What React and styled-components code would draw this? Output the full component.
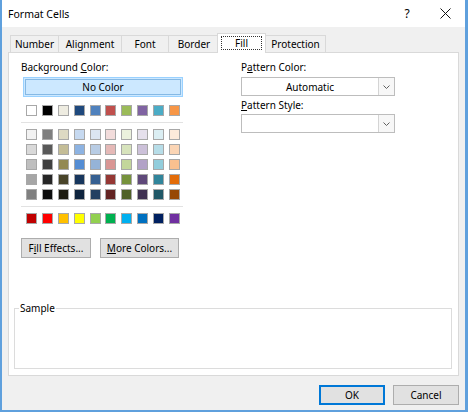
import React from 'react'
import styled, { createGlobalStyle, css } from 'styled-components'

const GlobalStyle = createGlobalStyle`
  html, body {
    margin: 0;
    padding: 0;
    background: #ffffff;
  }
  body {
    font-family: "Noto Sans", "Open Sans", sans-serif;
    font-size: 10px;
    color: #000000;
  }
`

const themeRow = ['#FFFFFF', '#000000', '#EEECE1', '#1F497D', '#4F81BD', '#C0504D', '#9BBB59', '#8064A2', '#4BACC6', '#F79646']

const tintRows = [
  ['#F2F2F2', '#7F7F7F', '#DDD9C3', '#C6D9F0', '#DBE5F1', '#F2DCDB', '#EBF1DD', '#E5E0EC', '#DBEEF3', '#FDEADA'],
  ['#D9D9D9', '#595959', '#C4BD97', '#8DB3E2', '#B8CCE4', '#E5B9B7', '#D7E3BC', '#CCC1D9', '#B7DDE8', '#FBD5B5'],
  ['#BFBFBF', '#404040', '#938953', '#548DD4', '#95B3D7', '#D99694', '#C3D69B', '#B2A2C7', '#92CDDC', '#FAC08F'],
  ['#A6A6A6', '#262626', '#494429', '#17365D', '#366092', '#953734', '#76923C', '#5F497A', '#31859B', '#E36C09'],
  ['#808080', '#0D0D0D', '#1D1B10', '#0F243E', '#244061', '#632423', '#4F6128', '#3F3151', '#205867', '#974806']
]

const standardRow = ['#C00000', '#FF0000', '#FFC000', '#FFFF00', '#92D050', '#00B050', '#00B0F0', '#0070C0', '#002060', '#7030A0']

const tabs = [
  { label: 'Number', width: 49 },
  { label: 'Alignment', width: 64 },
  { label: 'Font', width: 48 },
  { label: 'Border', width: 52 },
  { label: 'Fill', width: 49, active: true },
  { label: 'Protection', width: 61 }
]

export default function App () {
  return (
    <>
      <GlobalStyle />
      <Window>
        <TitleBar>
          <Title>Format Cells</Title>
          <HelpButton>?</HelpButton>
          <CloseButton>
            <svg width='11' height='11' viewBox='0 0 11 11'>
              <path d='M0.5 0.5 L10.5 10.5 M10.5 0.5 L0.5 10.5' stroke='#111' strokeWidth='1' fill='none' />
            </svg>
          </CloseButton>
        </TitleBar>

        <Body>
          <TabStrip>
            {tabs.map(t => (
              <Tab key={t.label} $width={t.width} $active={t.active}>
                {t.active ? <FocusRect>{t.label}</FocusRect> : t.label}
              </Tab>
            ))}
          </TabStrip>

          <Panel>
            <Columns>
              <LeftColumn>
                <Label>Background <u>C</u>olor:</Label>
                <NoColorButton>
                  <NoColorInner>No Color</NoColorInner>
                </NoColorButton>

                <SwatchGrid $top={8}>
                  {themeRow.map(c => <Swatch key={c} $color={c} />)}
                </SwatchGrid>
                <Separator />
                <SwatchGrid $top={6}>
                  {tintRows.flat().map((c, i) => <Swatch key={i} $color={c} />)}
                </SwatchGrid>
                <Separator />
                <SwatchGrid $top={6}>
                  {standardRow.map(c => <Swatch key={c} $color={c} />)}
                </SwatchGrid>

                <ButtonRow>
                  <Button $width={70}>F<u>i</u>ll Effects...</Button>
                  <Button $width={79}><u>M</u>ore Colors...</Button>
                </ButtonRow>
              </LeftColumn>

              <RightColumn>
                <Label>P<u>a</u>ttern Color:</Label>
                <Combo>
                  <ComboValue>Automatic</ComboValue>
                  <ComboArrow><Chevron /></ComboArrow>
                </Combo>
                <Label $top={2}><u>P</u>attern Style:</Label>
                <Combo $top={1}>
                  <ComboValue />
                  <ComboArrow><Chevron /></ComboArrow>
                </Combo>
              </RightColumn>
            </Columns>

            <SampleGroup>
              <legend>Sample</legend>
            </SampleGroup>
          </Panel>

          <Footer>
            <Button $width={66} $height={20} $default>OK</Button>
            <Button $width={66} $height={20}>Cancel</Button>
          </Footer>
        </Body>
      </Window>
    </>
  )
}

function Chevron () {
  return (
    <svg width='7' height='4' viewBox='0 0 7 4'>
      <path d='M0.5 0.5 L3.5 3.5 L6.5 0.5' stroke='#606060' strokeWidth='1' fill='none' />
    </svg>
  )
}

const Window = styled.div`
  width: 468px;
  height: 412px;
  box-sizing: border-box;
  border-left: 2px solid #5fa0dd;
  border-right: 3px solid #5fa0dd;
  border-bottom: 2px solid #5fa0dd;
  background: #f0f0f0;
  display: flex;
  flex-direction: column;
`

const TitleBar = styled.div`
  height: 27px;
  flex: none;
  background: #ffffff;
  display: flex;
  align-items: center;
  padding-left: 6px;
`

const Title = styled.div`
  font-size: 10.5px;
  flex: 1;
`

const controlBox = css`
  height: 27px;
  display: flex;
  align-items: center;
  justify-content: center;
`

const HelpButton = styled.div`
  ${controlBox}
  width: 36px;
  font-size: 12px;
`

const CloseButton = styled.div`
  ${controlBox}
  width: 40px;
`

const Body = styled.div`
  flex: 1;
  padding: 6px 6px 0 6px;
  display: flex;
  flex-direction: column;
`

const TabStrip = styled.div`
  height: 19px;
  display: flex;
  align-items: flex-end;
  padding-left: 2px;
`

const Tab = styled.div`
  box-sizing: border-box;
  width: ${p => p.$width}px;
  height: 17px;
  border: 1px solid #d9d9d9;
  border-bottom: none;
  margin-left: -1px;
  display: flex;
  align-items: center;
  justify-content: center;
  background: #f0f0f0;

  &:first-child {
    margin-left: 0;
  }

  ${p => p.$active && css`
    height: 20px;
    margin-left: -3px;
    margin-bottom: -1px;
    background: #ffffff;
    position: relative;
    z-index: 1;
    padding-bottom: 2px;
  `}
`

const FocusRect = styled.span`
  box-sizing: border-box;
  width: 41px;
  height: 14px;
  border: 1px dotted #333;
  display: flex;
  align-items: center;
  justify-content: center;
`

const Panel = styled.div`
  box-sizing: border-box;
  height: 324px;
  border: 1px solid #d9d9d9;
  background: #ffffff;
  padding: 7px 0 6px 0;
  display: flex;
  flex-direction: column;
`

const Columns = styled.div`
  display: flex;
  gap: 58px;
  padding-left: 12px;
`

const LeftColumn = styled.div`
  width: 162px;
  display: flex;
  flex-direction: column;
`

const RightColumn = styled.div`
  width: 154px;
  display: flex;
  flex-direction: column;
`

const Label = styled.div`
  height: 15px;
  line-height: 15px;
  margin-top: ${p => p.$top || 0}px;
  white-space: nowrap;

  u {
    text-underline-offset: 1px;
  }
`

const NoColorButton = styled.div`
  box-sizing: border-box;
  margin: 2px 0 0 2px;
  width: 160px;
  height: 20px;
  background: #cce8ff;
  border: 1px solid #99d1ff;
  padding: 1px;
  display: flex;
`

const NoColorInner = styled.div`
  flex: 1;
  border: 1px solid #86b9e4;
  display: flex;
  align-items: center;
  justify-content: center;
`

const SwatchGrid = styled.div`
  margin: ${p => p.$top}px 0 0 5px;
  width: 154px;
  display: grid;
  grid-template-columns: repeat(10, 11px);
  justify-content: space-between;
  row-gap: 4px;
`

const Swatch = styled.div`
  box-sizing: border-box;
  width: 11px;
  height: 11px;
  background: ${p => p.$color};
  border: 1px solid #a8a8a8;
`

const Separator = styled.div`
  height: 1px;
  margin-top: 6px;
  background: #e2e2e2;
`

const ButtonRow = styled.div`
  display: flex;
  gap: 9px;
  margin-top: 14px;
`

const Button = styled.div`
  box-sizing: border-box;
  width: ${p => p.$width}px;
  height: ${p => p.$height || 20}px;
  background: #e1e1e1;
  border: 1px solid #adadad;
  display: flex;
  align-items: center;
  justify-content: center;
  white-space: nowrap;

  ${p => p.$default && css`
    border-color: #0078d7;
    box-shadow: inset 0 0 0 1px #0078d7;
  `}
`

const Combo = styled.div`
  box-sizing: border-box;
  margin-top: ${p => p.$top ?? 2}px;
  width: 154px;
  height: 19px;
  border: 1px solid #bdbdbd;
  background: #ffffff;
  display: flex;
`

const ComboValue = styled.div`
  flex: 1;
  display: flex;
  align-items: center;
  justify-content: center;
`

const ComboArrow = styled.div`
  width: 15px;
  border-left: 1px solid #d4d4d4;
  background: #f7f7f7;
  display: flex;
  align-items: center;
  justify-content: center;
`

const SampleGroup = styled.fieldset`
  box-sizing: border-box;
  margin: auto 6px 0 5px;
  padding: 0;
  min-width: 0;
  height: 68px;
  border: 1px solid #dcdcdc;

  legend {
    margin-left: 4px;
    padding: 0 1px;
    line-height: 15px;
  }
`

const Footer = styled.div`
  display: flex;
  justify-content: flex-end;
  gap: 8px;
  margin-top: 9px;
`
